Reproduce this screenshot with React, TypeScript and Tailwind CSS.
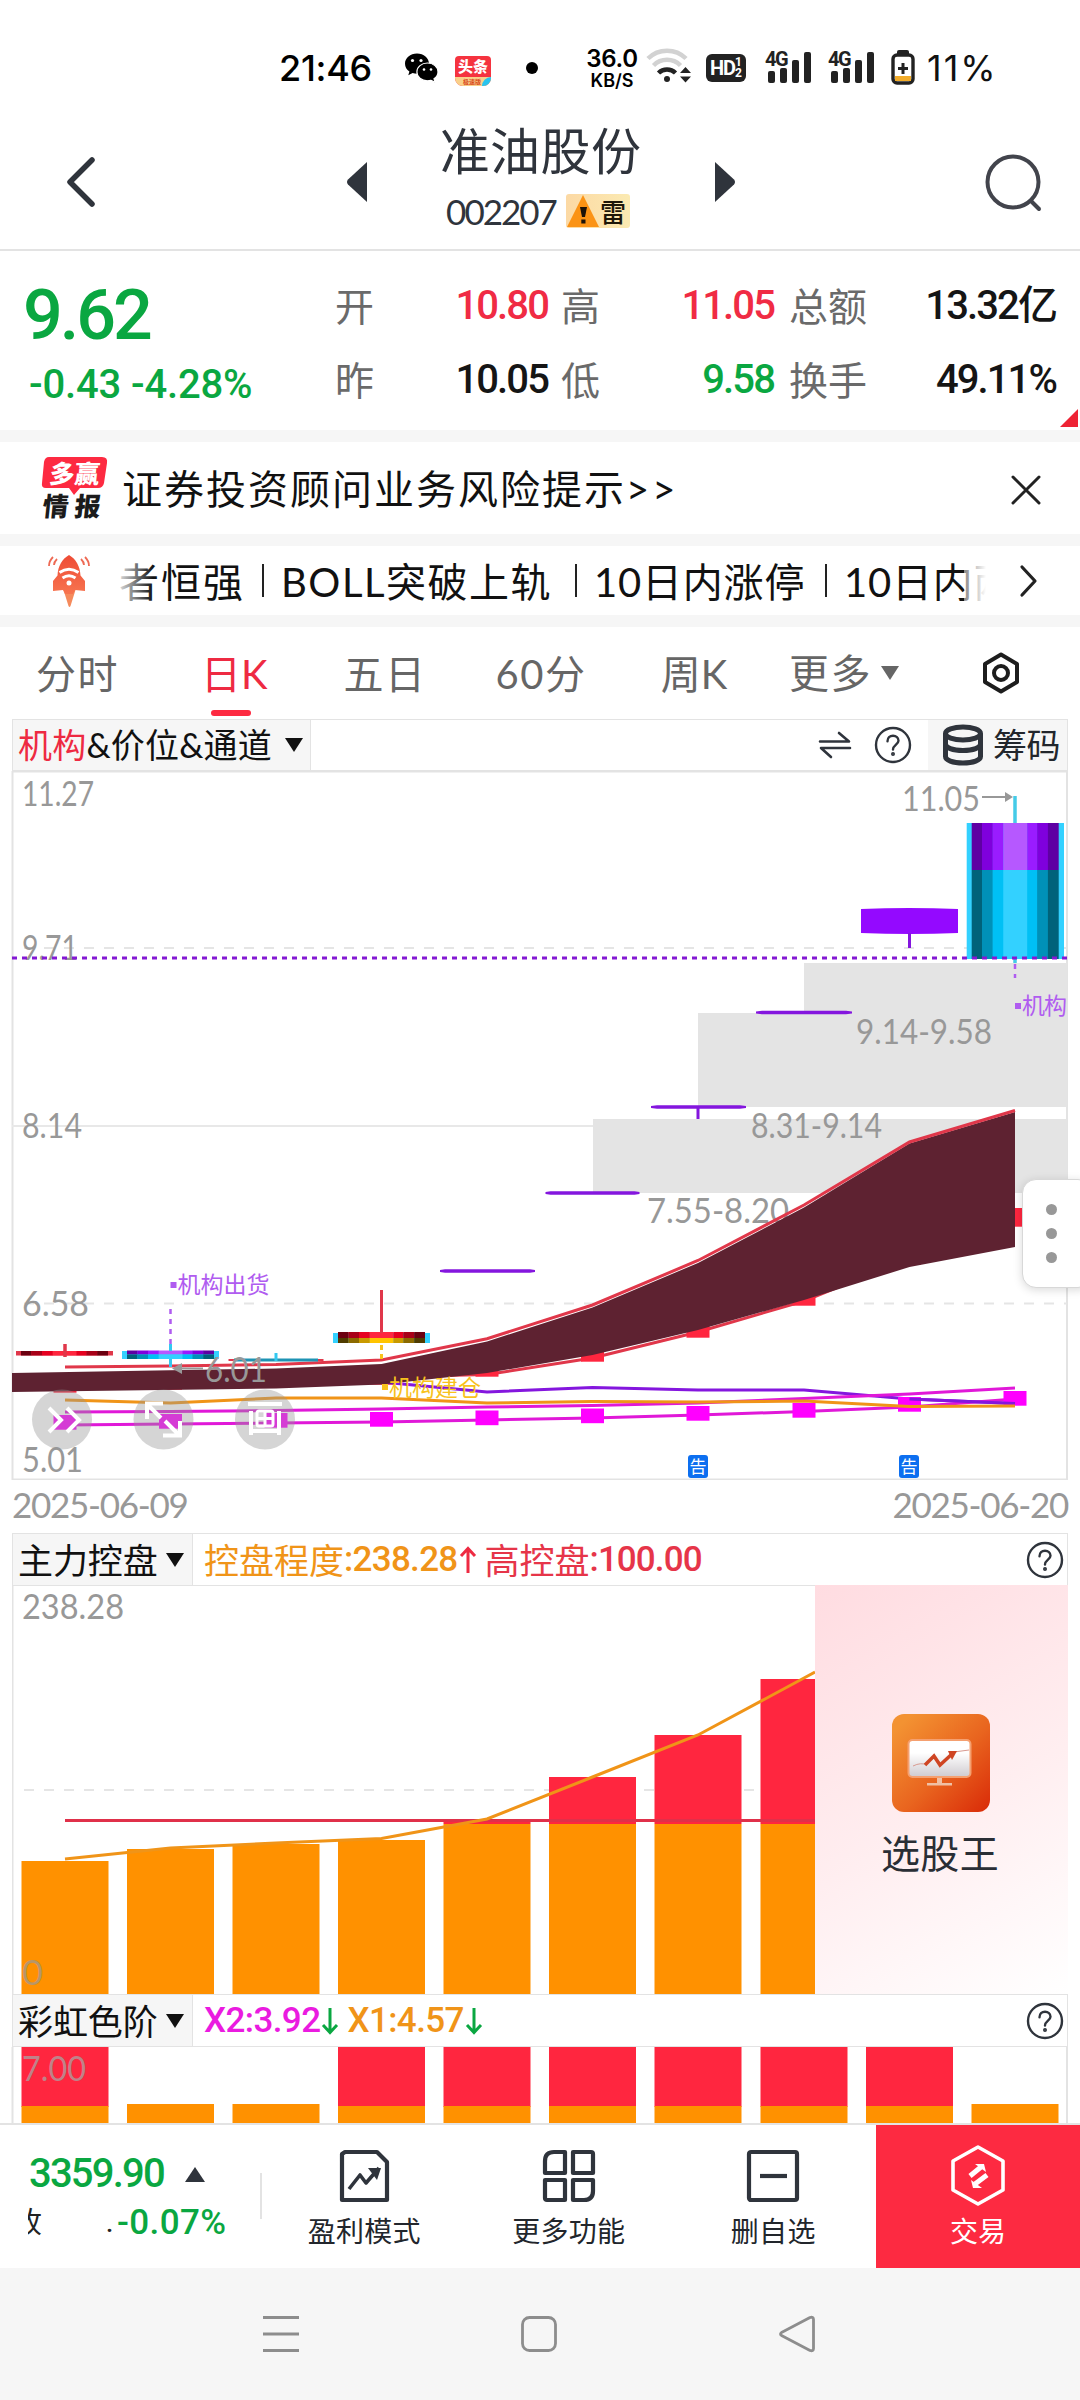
import React from 'react';

const LATO = "font-['Lato','Noto_Sans_CJK_SC',sans-serif]";
const ROBOTO = "font-['Roboto','Noto_Sans_CJK_SC',sans-serif]";

// x centre of each trading day
const DAYS = [65, 170.5, 276, 381.5, 487, 592.5, 698, 804, 909.5, 1015];

const Help = () => (
    <svg width="38" height="38" viewBox="0 0 38 38" fill="none" stroke="#2f343c" strokeWidth="2.4" strokeLinecap="round">
        <circle cx="19" cy="19" r="17" />
        <path d="M13.5 15.2c0-3.4 2.4-5.5 5.5-5.5s5.5 2.1 5.5 5c0 3.6-5.5 4.3-5.5 8.8" />
        <circle cx="19" cy="28" r="0.8" fill="#2f343c" />
    </svg>
);

const Caret = ({ color = '#111' }: any) => (
    <svg width="20" height="16" viewBox="0 0 20 16" className="shrink-0">
        <path d="M1 1h18L10 15z" fill={color} />
    </svg>
);

const Signal = () => (
    <div className="relative w-[46px] h-[34px]">
        <svg width="46" height="34" viewBox="0 0 46 34" fill="#222">
            <rect x="3" y="21" width="7" height="12" rx="2" />
            <rect x="15" y="18" width="7" height="15" rx="2" />
            <rect x="27" y="10" width="7" height="23" rx="2" />
            <rect x="39" y="2" width="7" height="31" rx="2" />
        </svg>
        <span className={`absolute left-0 -top-[1px] text-[20px] leading-[20px] font-bold tracking-[-1.5px] text-[#222] ${ROBOTO}`}>4G</span>
    </div>
);

const StatusBar = () => (
    <div className={`h-[112px] pt-[48px] flex items-start text-black ${LATO}`}>
        <div className="w-[124px] ml-[279px] text-[36px] leading-[40px] font-['Inter'] font-medium tracking-[-0.3px]">21:46</div>
        <svg width="36" height="32" viewBox="0 0 36 32" className="ml-[1px] mt-[4px]">
            <path d="M13 1.500C6.300 1.500 1 6 1 11.700c0 3.200 1.700 6 4.400 7.900L4.300 23.300l4.300-2.200c1.400.4 2.900.6 4.400.6 6.700 0 12-4.400 12-10S19.700 1.500 13 1.500z" />
            <circle cx="8.500" cy="8.500" r="1.600" fill="#fff" />
            <circle cx="17" cy="8.500" r="1.600" fill="#fff" />
            <path d="M23.500 11c-6 0-10.600 4-10.600 8.900s4.600 8.900 10.600 8.900c1.200 0 2.400-.2 3.500-.5l4.200 2.100-1.200-3.700c2.500-1.600 4-4 4-6.800 0-4.900-4.600-8.900-10.500-8.900z" stroke="#fff" strokeWidth="1.200" />
            <circle cx="20" cy="17.500" r="1.300" fill="#fff" />
            <circle cx="27" cy="17.500" r="1.300" fill="#fff" />
        </svg>
        <div className="relative ml-[15px] mt-[8px] w-[36px] h-[30px] rounded-[4px] rounded-b-[8px] overflow-hidden bg-[#f5333f] flex flex-col items-center">
            <div className="text-white text-[15px] leading-[21px] font-black">头条</div>
            <div className="w-full h-[9px] bg-[#f9d08a] text-[#d8481c] text-[6px] leading-[9px] pl-[8px] font-bold">极速版</div>
            <div className="absolute right-0 bottom-0 w-[9px] h-[9px] bg-[#29c3ee] rounded-tl-full"></div>
        </div>
        <div className="ml-[35px] mt-[14px] w-[12px] h-[12px] rounded-full bg-black"></div>
        <div className="ml-[46px] w-[56px] flex flex-col items-center font-['Inter'] font-semibold">
            <div className="text-[24px] leading-[22px] tracking-[-0.3px]">36.0</div>
            <div className="mt-[2px] text-[18px] leading-[18px]">KB/S</div>
        </div>
        <svg width="48" height="36" viewBox="0 0 48 36" className="ml-[6px]" fill="none">
            <path d="M2 10.500a27 27 0 0 1 38 0" stroke="#d2d2d2" strokeWidth="4.500" />
            <path d="M7.500 17.500a19 19 0 0 1 27 0" stroke="#d2d2d2" strokeWidth="4.500" />
            <path d="M12.500 25a12 12 0 0 1 17 0" stroke="#222" strokeWidth="4.500" />
            <circle cx="21" cy="31" r="3" fill="#222" />
            <path d="M34 25h11l-5.500-6zM34 28.500h11l-5.500 6z" fill="#222" />
        </svg>
        <div className={`ml-[12px] mt-[6px] w-[40px] h-[28px] rounded-[6px] bg-[#222] text-white font-bold pl-[4px] flex items-center ${ROBOTO}`}>
            <div className="w-[25px] text-[20px] leading-[28px] tracking-[-1px]">HD</div>
            <div className="text-[12px] leading-[11px]">
                <div>1</div>
                <div>2</div>
            </div>
        </div>
        <div className="ml-[19px] mt-[2px]"><Signal /></div>
        <div className="ml-[17px] mt-[2px]"><Signal /></div>
        <svg width="24" height="36" viewBox="0 0 24 36" className="ml-[17px] mt-px">
            <rect x="6" y="1" width="12" height="6" rx="2" fill="#222" />
            <rect x="2" y="6" width="20" height="28" rx="4" fill="#fff" stroke="#222" strokeWidth="3.400" />
            <path d="M4 27h16v5H4z" fill="#f2ac2a" />
            <path d="M12 14v11M7 19.500h10" stroke="#222" strokeWidth="3" />
        </svg>
        <div className="ml-[12px] text-[36px] leading-[40px] font-['Inter'] tracking-[2px] text-[#111]">11%</div>
    </div>
);

const Header = () => (
    <div className="h-[139px] border-b-2 border-[#e3e3e3] flex text-[#2f343c]">
        <svg width="40" height="60" viewBox="0 0 40 60" className="ml-[59px] mt-[40px]" fill="none" stroke="#2f343c" strokeWidth="5.500" strokeLinecap="round" strokeLinejoin="round">
            <path d="M33 8 11 30l22 22" />
        </svg>
        <svg width="22" height="44" viewBox="0 0 22 44" className="ml-[247px] mt-[48px]">
            <path d="M21 2v40L2 24.500q-2-2.500 0-5z" fill="#2f343c" />
        </svg>
        <div className="w-[346px] flex flex-col items-center">
            <div className={`mt-[8px] text-[50px] leading-[62px] tracking-[0.4px] mr-[1px] ${LATO}`}>准油股份</div>
            <div className="flex items-center mt-[9px] mr-[6px] h-[40px]">
                <div className={`text-[35px] leading-[40px] tracking-[-2px] ${LATO}`}>002207</div>
                <div className="ml-[10px] w-[64px] h-[34px] rounded-[3px] bg-gradient-to-r from-[#fcd9a4] to-[#fbeab2] flex items-center">
                    <svg width="34" height="34" viewBox="0 0 34 34">
                        <path d="M17 1 33 33H1z" fill="#fb9315" />
                        <path d="M14 13h7l-2 10h-3z" fill="#1c1208" />
                        <rect x="15.300" y="25.500" width="4.200" height="4" fill="#1c1208" />
                    </svg>
                    <span className="text-[26px] leading-[34px] font-medium text-[#1d1608] font-['Noto_Sans_CJK_SC']">雷</span>
                </div>
            </div>
        </div>
        <svg width="22" height="44" viewBox="0 0 22 44" className="mt-[48px]">
            <path d="M1 2v40l19-17.500q2-2.500 0-5z" fill="#2f343c" />
        </svg>
        <svg width="64" height="64" viewBox="0 0 64 64" className="ml-[246px] mt-[39px]" fill="none" stroke="#42444c" strokeWidth="4" strokeLinecap="round">
            <circle cx="31" cy="31" r="25.500" />
            <path d="m49 50 8 8" />
        </svg>
    </div>
);

const QuoteRow = ({ items }: any) => (
    <div className="h-[74px] grid grid-cols-[49px_164px_13px_49px_164px_15px_86px_181px] items-center">
        {items.map(([label, value, color]: any) => (
            <React.Fragment key={label}>
                <div className={`text-[39px] leading-[50px] text-[#6a6a6a] whitespace-nowrap ${LATO}`}>{label}</div>
                <div className={`text-right text-[40px] leading-[50px] font-medium tracking-[-1.900px] whitespace-nowrap ${color} ${ROBOTO}`}>{value}</div>
                {label.length === 1 && <div></div>}
            </React.Fragment>
        ))}
    </div>
);

const Quote = () => (
    <div className="h-[179px] flex relative">
        <div className={`w-[335px] pl-[23px] text-[#0aa741] font-medium ${ROBOTO}`}>
            <div className="mt-[22px] text-[70px] leading-[84px] tracking-[-3px]">9.62</div>
            <div className="mt-[3px] ml-[6px] text-[40px] leading-[50px] tracking-[-0.150px] whitespace-nowrap">-0.43 -4.28%</div>
        </div>
        <div className="pt-[18px]">
            <QuoteRow items={[['开', '10.80', 'text-[#f02b44]'], ['高', '11.05', 'text-[#f02b44]'], ['总额', '13.32亿', 'text-[#151515]']]} />
            <QuoteRow items={[['昨', '10.05', 'text-[#151515]'], ['低', '9.58', 'text-[#0aa741]'], ['换手', '49.11%', 'text-[#151515]']]} />
        </div>
        <svg width="18" height="18" viewBox="0 0 18 18" className="absolute right-[2px] bottom-[3px]">
            <path d="M18 0v18H0z" fill="#ee2334" />
        </svg>
    </div>
);

const Gap = () => <div className="h-[12px] bg-[#f6f6f6]"></div>;

const Notice = () => (
    <div className="h-[92px] flex items-center">
        <div className="relative ml-[40px] w-[70px] h-[64px] font-['Noto_Sans_CJK_SC'] font-black">
            <svg width="70" height="40" viewBox="0 0 70 40" className="absolute left-0 top-0">
                <path d="M9 1h53q6 0 5 6l-3 20q-1 5-6 5H40l-6 7-5-7H6q-5 0-4-5l2-21q1-5 5-5z" fill="#fd2a41" />
            </svg>
            <div className="absolute left-[10px] top-[2px] text-white text-[25px] leading-[28px] -skew-x-6">多赢</div>
            <div className="absolute left-[3px] top-[35px] text-[#1b1b1b] text-[26px] leading-[28px] tracking-[6px] -skew-x-6">情报</div>
        </div>
        <div className={`ml-[12px] mt-[2px] text-[40px] leading-[50px] tracking-[2px] text-[#111] flex-1 ${LATO}`}>
            证券投资顾问业务风险提示<span className="tracking-[3px]">&gt;&gt;</span>
        </div>
        <svg width="32" height="32" viewBox="0 0 32 32" className="mr-[38px] mt-[4px]" stroke="#222" strokeWidth="3" strokeLinecap="round">
            <path d="m3 3 26 26M29 3 3 29" />
        </svg>
    </div>
);

const Ticker = () => (
    <div className="h-[69px] flex items-center">
        <svg width="44" height="54" viewBox="0 0 44 54" className="ml-[47px]">
            <defs>
                <linearGradient id="rocket" x1="0" y1="0" x2="0" y2="1">
                    <stop offset="0" stopColor="#ee4b35" />
                    <stop offset="1" stopColor="#f7744f" />
                </linearGradient>
            </defs>
            <path d="M16.500 36h12l-5 16q-1 2-2 0z" fill="#f58a5c" />
            <path d="M22 1c7 4 11 11 11.500 20.500L38 27v10l-10-1-2 4h-8l-2-4-10 1V27l4.500-5.500C11 12 15 5 22 1z" fill="url(#rocket)" />
            <path d="M12.500 18.500q9.500-6.500 19 0M15.500 24q6.500-4.500 13 0" fill="none" stroke="#fff" strokeWidth="3" />
            <circle cx="22" cy="29" r="2.500" fill="#fff" />
            <path d="M6 3q-4 4-4 9M10 5q-3 3-3 6M38 3q4 4 4 9M34 5q3 3 3 6" fill="none" stroke="#ee6a54" strokeWidth="1.800" />
        </svg>
        <div className={`relative ml-[22px] w-[873px] h-[60px] overflow-hidden flex items-center text-[40px] leading-[60px] tracking-[2px] text-[#111] whitespace-nowrap ${LATO}`}>
            <div className="w-[149px] shrink-0 pl-[6px] mt-[2px]">者恒强</div>
            <div className="w-[2px] h-[33px] shrink-0 bg-[#222]"></div>
            <div className="w-[311px] shrink-0 pl-[17px] mt-[2px] tracking-[1.500px]">BOLL突破上轨</div>
            <div className="w-[2px] h-[33px] shrink-0 bg-[#222]"></div>
            <div className="w-[248px] shrink-0 pl-[17px] mt-[2px] tracking-[0.800px]">10日内涨停</div>
            <div className="w-[2px] h-[33px] shrink-0 bg-[#222]"></div>
            <div className="shrink-0 pl-[17px] mt-[2px] tracking-[0.800px]">10日内两</div>
            <div className="absolute left-0 top-0 w-[40px] h-full bg-gradient-to-r from-white to-white/0"></div>
            <div className="absolute right-0 top-0 w-[22px] h-full bg-gradient-to-l from-white to-white/50"></div>
        </div>
        <svg width="20" height="34" viewBox="0 0 20 34" className="ml-[33px]" fill="none" stroke="#222" strokeWidth="3.200" strokeLinecap="round" strokeLinejoin="round">
            <path d="m3 3 13 14L3 31" />
        </svg>
    </div>
);

const Tabs = () => (
    <div className={`h-[92px] flex text-[40px] leading-[94px] tracking-[1.500px] text-[#666] whitespace-nowrap ${LATO}`}>
        <div className="w-[166px] pl-[36px]">分时</div>
        <div className="w-[130px] relative pl-[35px] text-[#ee2a42] tracking-[0px]">
            日K
            <div className="absolute left-[45px] bottom-[3px] w-[40px] h-[6px] rounded-[3px] bg-[#fd2a41]"></div>
        </div>
        <div className="w-[178px] text-center">五日</div>
        <div className="w-[134px] text-center">60分</div>
        <div className="w-[172px] text-center tracking-[0px]">周K</div>
        <div className="w-[180px] pl-[9px] flex items-center gap-[8px]">更多<Caret color="#666" /></div>
        <svg width="42" height="44" viewBox="0 0 42 44" className="ml-[20px] mt-[24px]" fill="none" stroke="#1d1d1d" strokeWidth="4" strokeLinejoin="round">
            <path d="M21 3.500 37 13v18L21 40.500 5 31V13z" />
            <circle cx="21" cy="22" r="7" />
        </svg>
    </div>
);

const Toolbar = () => (
    <div className={`mx-[12px] h-[52px] border border-[#e3e3e3] flex items-center text-[34px] leading-[50px] text-[#111] ${LATO}`}>
        <div className="w-[298px] h-full bg-[#f6f6f6] border-r border-[#e3e3e3] pl-[5px] flex items-center gap-[8px] whitespace-nowrap">
            <div className="w-[258px] tracking-[0.200px]"><span className="text-[#ee2a42]">机构</span>&amp;价位&amp;通道</div>
            <Caret />
        </div>
        <svg width="34" height="32" viewBox="0 0 34 32" className="ml-[507px]" fill="none" stroke="#2f343c" strokeWidth="2.600" strokeLinecap="round" strokeLinejoin="round">
            <path d="M2 12.500h29L21 4M32 19H3l10 9" />
        </svg>
        <div className="ml-[22px] flex items-center"><Help /></div>
        <div className="ml-auto w-[139px] h-full bg-[#f6f6f6] flex items-center pl-[13px]">
            <svg width="44" height="42" viewBox="0 0 44 42" fill="none" stroke="#2f343c" strokeWidth="5">
                <ellipse cx="22" cy="9.500" rx="17.500" ry="6.500" />
                <path d="M4.500 9.500v23c0 3.500 7 6.500 17.500 6.500s17.500-3 17.500-6.500v-23M4.500 20c0 3.500 7 6.500 17.500 6.500S39.500 23.500 39.500 20" />
            </svg>
            <span className="ml-[8px] text-[#22262c] tracking-[-0.500px]">筹码</span>
        </div>
    </div>
);

// body drawn as a shaded cylinder of vertical strips
const Strips = ({ x, y, h, colors }: any) => {
    const edges = [5, 15.3, 26, 36.7, 60.5, 70.4, 81.2, 91.8];
    return colors.concat(colors.slice(0, 3).reverse()).map((c: string, i: number) => (
        <rect key={i} x={x + edges[i]} y={y} width={edges[i + 1] - edges[i] + 0.2} height={h} fill={c} />
    ));
};

const PURPLE = ['#5e00a3', '#7f00dd', '#9a1cff', '#b658ff'];
const CYAN = ['#00627a', '#0091b8', '#00c0f5', '#33d1ff'];
const RED = ['#6b0010', '#a80018', '#e60020', '#ff263f'];
const GOLD = ['#4f3c00', '#8c6a00', '#c99a00', '#ffc400'];

const Label = ({ x, y, w, children, fill = '#989898' }: any) => (
    <text x={x} y={y} textLength={w} lengthAdjust="spacingAndGlyphs" fontSize="35" fontFamily="Lato" fill={fill}>{children}</text>
);

const line = (ys: number[], from = 0) => ys.map((y, i) => `${DAYS[i + from]},${y}`).join(' ');

const KChart = () => {
    const redTops = [1374, 1371, 1369, 1366, 1358, 1343, 1319, 1287, 1246, 1208];
    const pinkTops = [1415, 1414, 1413, 1412, 1410.5, 1408.5, 1406, 1403, 1397, 1391];
    return (
        <svg width="1080" height="709" viewBox="0 771 1080 709" className="block">
            <path d="M12.500 771V1479.500H1067V771M12 771.500h1055" fill="none" stroke="#e3e3e3" strokeWidth="2" />
            <path d="M24 948H1067M24 1303.500H1067" stroke="#e5e5e5" strokeWidth="2" strokeDasharray="10 10" />
            <path d="M12 1126H1067" stroke="#e8e8e8" strokeWidth="2" />
            <path d="M804 963H1067V1107H698V1013H804z" fill="#e4e4e4" />
            <path d="M593 1119H1067V1193H593z" fill="#e4e4e4" />

            <Label x={22} y={806} w={72}>11.27</Label>
            <Label x={22} y={960} w={56}>9.71</Label>
            <Label x={22} y={1138} w={60}>8.14</Label>
            <Label x={22} y={1316} w={67}>6.58</Label>
            <Label x={22} y={1472} w={61}>5.01</Label>
            <Label x={856} y={1044} w={136}>9.14-9.58</Label>
            <Label x={751} y={1138} w={131}>8.31-9.14</Label>
            <Label x={647} y={1223} w={142}>7.55-8.20</Label>
            <Label x={902} y={811} w={78}>11.05</Label>

            {/* last price */}
            <rect x="966.700" y="823" width="97.300" height="136" fill="#33d1ff" />
            <Strips x={966.7} y={823} h={47} colors={PURPLE} />
            <Strips x={966.7} y={870} h={89} colors={CYAN} />
            <path d="M1015 796v27M1015 959v4" stroke="#45cbe8" strokeWidth="3.500" />
            <path d="M1015 964v14" stroke="#b05cf0" strokeWidth="2.500" strokeDasharray="5 5" />
            <path d="M12 958H1067" stroke="#8318d4" strokeWidth="3" strokeDasharray="5 5" />
            <path d="M982 797h24" stroke="#989898" strokeWidth="2" />
            <path d="m1005 792 8 5-8 5z" fill="#989898" />

            {/* limit-up days */}
            <g fill="#8416de">
                <path d="M861 909q48-2 97 0v24q-48 2-97 0z" fill="#9409ff" />
                <rect x="908" y="933" width="3" height="15" />
                <path d="M756 1011.500l6-.8h84l6 .8v2l-6 .8h-84l-6-.8z" />
                <path d="M651 1106l6-.8h83l6 .8v2l-6 .8h-83l-6-.8z" />
                <rect x="696.500" y="1108" width="3" height="11" />
                <path d="M545.500 1192l5-.8h84l5 .8v2l-5 .8h-84l-5-.8z" />
                <path d="M440 1270l5-.8h85l5 .8v2l-5 .8h-85l-5-.8z" />
            </g>

            {/* institution cost lines */}
            <polyline points={line([1383, 1381, 1379, 1377, 1374.5, 1358, 1332, 1301, 1258, 1217])} fill="none" stroke="#e0374a" strokeWidth="3" />
            {redTops.map((y, i) => <rect key={i} x={DAYS[i] - 11.5} y={y} width="23" height="18.700" fill="#ff263f" />)}
            <polyline points={line([1382, 1392, 1387.5, 1390, 1390, 1399, 1403.5], 3)} fill="none" stroke="#8416de" strokeWidth="3" />
            <polygon
                points="12,1373 276,1368.500 381.500,1364 487,1341.500 592.500,1307.500 698,1263 804,1207.500 909.500,1143.500 1015,1112 1015,1247 909.500,1267 804,1300 698,1330 592.500,1355 487,1373 381.500,1384.500 276,1388.500 12,1392"
                fill="#5e2231"
            />
            <polyline points={line([1367, 1366, 1364.5, 1360, 1338.7, 1305, 1260.500, 1205, 1142, 1110.500])} fill="none" stroke="#e0374a" strokeWidth="3" />

            <polyline points={line([1412, 1411.5, 1410.5, 1409, 1407, 1405.5, 1403, 1398.5, 1394, 1388])} fill="none" stroke="#e018d8" strokeWidth="3" />
            <polyline points={line([1425, 1424, 1423, 1422, 1420, 1418, 1415, 1411.5, 1407, 1399])} fill="none" stroke="#e018d8" strokeWidth="3" />
            {pinkTops.map((y, i) => <rect key={i} x={DAYS[i] - 11.5} y={y} width="23" height="14.700" fill="#ff00ff" />)}
            <polyline points={line([1399, 1403.500], 8)} fill="none" stroke="#8416de" strokeWidth="3" />
            <polyline points={line([1400, 1403, 1398, 1398, 1403, 1401.5, 1402, 1401, 1406.5, 1406])} fill="none" stroke="#f09418" strokeWidth="3" />

            {/* early candles */}
            <rect x="16" y="1351" width="97" height="4.500" fill="#e0374a" />
            <Strips x={16} y={1351} h={4.5} colors={RED} />
            <path d="M65 1344v13" stroke="#e0374a" strokeWidth="3.500" />
            <rect x="122" y="1351" width="97" height="8" fill="#33d1ff" />
            <Strips x={122} y={1350.5} h={4} colors={PURPLE} />
            <Strips x={122} y={1354.5} h={4.5} colors={CYAN} />
            <path d="M170.500 1344v7M170.500 1359v8" stroke="#33c8f0" strokeWidth="3" />
            <path d="M170.500 1309v35" stroke="#b05cf0" strokeWidth="2.500" strokeDasharray="5 5" />
            <path d="M228.500 1360h95" stroke="#e0374a" strokeWidth="2" />
            <path d="M234 1360h84" stroke="#1e93b4" strokeWidth="3" />
            <path d="M276 1353v8" stroke="#33c8f0" strokeWidth="3" />
            <rect x="333" y="1333" width="97" height="10" fill="#33d1ff" />
            <Strips x={333} y={1332} h={6} colors={RED} />
            <Strips x={333} y={1338} h={5} colors={GOLD} />
            <path d="M381.500 1290v43" stroke="#e0374a" strokeWidth="3" />
            <path d="M381.500 1345v15" stroke="#f8c21c" strokeWidth="3" strokeDasharray="5 4" />

            <path d="M181 1368.500h22" stroke="#989898" strokeWidth="2" />
            <path d="m182 1363-10 5.500 10 5.500z" fill="#989898" />
            <Label x={205} y={1382} w={62}>6.01</Label>

            <g fontFamily="Noto Sans CJK SC" fontSize="23">
                <rect x="170.500" y="1282" width="6" height="6" fill="#b05cf0" />
                <text x="177.500" y="1293" fill="#b05cf0">机构出货</text>
                <rect x="382" y="1384" width="6" height="6" fill="#f8c21c" />
                <text x="389" y="1396" fill="#f8c21c">机构建仓</text>
                <rect x="1015" y="1003" width="6" height="6" fill="#b05cf0" />
                <text x="1022" y="1013.500" fill="#b05cf0" textLength="45">机构</text>
            </g>

            {[698, 909].map((x) => (
                <g key={x}>
                    <rect x={x - 10} y="1455" width="20" height="23" rx="3" fill="#0d6ff0" />
                    <text x={x} y="1472.500" textAnchor="middle" fontFamily="Noto Sans CJK SC" fontSize="17" fill="#fff">告</text>
                </g>
            ))}

            {/* floating tools */}
            <g fill="#969696" fillOpacity="0.4">
                <circle cx="62" cy="1419.500" r="30" />
                <circle cx="163.500" cy="1419.500" r="30" />
                <circle cx="265" cy="1419.500" r="30" />
            </g>
            <g fill="none" stroke="#fff" strokeWidth="4">
                <path d="m49 1408 12 12-12 12M67 1408l12 12-12 12" />
                <path d="M163 1403.500h-16V1419M148 1405l13 13M165 1421l15 15M163 1435.500h17V1421" />
                <path d="M248 1404h34M251 1435V1411M279 1435V1411M251 1431h28" />
                <rect x="257" y="1411" width="16" height="15" rx="2" strokeWidth="3" />
                <path d="M265 1411v15M257 1418.500h16" strokeWidth="3" />
            </g>
        </svg>
    );
};

const SubHeader = ({ name, children }: any) => (
    <div className={`mx-[12px] h-[53px] border border-[#e3e3e3] flex items-center text-[35px] leading-[50px] text-[#111] whitespace-nowrap ${LATO}`}>
        <div className="w-[180px] h-full bg-[#f6f6f6] border-r border-[#e3e3e3] pl-[5px] flex items-center">
            <div className="w-[147px] tracking-[-0.100px]">{name}</div>
            <Caret />
        </div>
        <div className="flex-1 pl-[11px] flex items-center">{children}</div>
        <div className="mr-[3px]"><Help /></div>
    </div>
);

const Arrow = ({ color, down }: any) => (
    <svg width="20" height="28" viewBox="0 0 20 28" fill="none" stroke={color} strokeWidth="3" className={down ? 'rotate-180' : ''}>
        <path d="M10 27V3M3 10l7-7.500L17 10" />
    </svg>
);

const ControlChart = () => {
    const tops = [1861, 1849, 1844, 1840, 1822, 1777, 1735, 1679];
    return (
        <svg width="803" height="408" viewBox="12 1586 803 408" className="block">
            <path d="M12.500 1586v408" stroke="#e3e3e3" strokeWidth="2" />
            <path d="M24 1790H815" stroke="#e5e5e5" strokeWidth="2" strokeDasharray="10 10" />
            <Label x={22} y={1619} w={102}>238.28</Label>
            {tops.map((y, i) => (
                <g key={i}>
                    {y < 1824 && <rect x={DAYS[i] - 43.5} y={y} width="87" height={1824 - y} fill="#ff263f" />}
                    <rect x={DAYS[i] - 43.5} y={Math.max(y, 1824)} width="87" height="171" fill="#ff9100" />
                </g>
            ))}
            <path d="M65 1820.500H815" stroke="#e0304a" strokeWidth="3" />
            <polyline points={line([1859, 1848, 1843, 1838.5, 1819, 1777, 1735, 1678]) + ' 815,1672'} fill="none" stroke="#f09418" strokeWidth="3" />
            <Label x={22} y={1985} w={21} fill="#b89668">0</Label>
        </svg>
    );
};

const Promo = () => (
    <div className="w-[253px] h-[409px] -mt-px bg-[linear-gradient(150deg,#ffdce1_0%,#ffeef0_55%,#ffffff_100%)] flex flex-col items-center">
        <svg width="98" height="98" viewBox="0 0 98 98" className="mt-[129px] mr-[1px]">
            <defs>
                <linearGradient id="tile" x1="0" y1="0" x2="1" y2="1">
                    <stop offset="0.1" stopColor="#f39232" />
                    <stop offset="0.55" stopColor="#e9651f" />
                    <stop offset="1" stopColor="#d92a08" />
                </linearGradient>
                <linearGradient id="screen" x1="0" y1="0" x2="0" y2="1">
                    <stop offset="0.35" stopColor="#fff" />
                    <stop offset="1" stopColor="#cfcbd0" />
                </linearGradient>
            </defs>
            <rect width="98" height="98" rx="12" fill="url(#tile)" />
            <rect x="16.500" y="26" width="62" height="37" rx="4" fill="url(#screen)" stroke="#f5a070" strokeWidth="2" />
            <path d="M45 64h5v5h10v2.500H35V69h10z" fill="#efc0a5" />
            <path d="M21 52q8-4 14-1M62 38l15-2" stroke="#d99a90" fill="none" />
            <path d="m33 51 9-9 6 9 12-11" fill="none" stroke="#cf4523" strokeWidth="3.500" />
            <path d="m56 37 9 0-5 9z" fill="#cf4523" />
        </svg>
        <div className={`mt-[14px] text-[39px] leading-[54px] tracking-[0.300px] text-[#2a2e35] mr-[3px] ${LATO}`}>选股王</div>
    </div>
);

const RainbowChart = () => (
    <svg width="1080" height="76" viewBox="0 2047 1080 76" className="block">
        <path d="M12.500 2047v76M1067 2047v76" stroke="#e3e3e3" strokeWidth="2" />
        {DAYS.map((x, i) => {
            const high = ![1, 2, 9].includes(i);
            return (
                <g key={x}>
                    {high && <rect x={x - 43.5} y="2047" width="87" height="60" fill="#ff263f" />}
                    <rect x={x - 43.5} y={high ? 2106 : 2104} width="87" height="20" fill="#ff9100" />
                </g>
            );
        })}
        <Label x={22} y={2081} w={64} fill="#bf8289">7.00</Label>
    </svg>
);

const Action = ({ label, children }: any) => (
    <div className="w-[204.500px] flex flex-col items-center">
        <svg width="60" height="64" viewBox="0 0 60 64" className="mt-[19px]" fill="none" stroke="#2f343c" strokeWidth="4.200" strokeLinejoin="round">{children}</svg>
        <div className="mt-[2px] text-[28px] leading-[42px] tracking-[0.300px]">{label}</div>
    </div>
);

const BottomBar = () => (
    <div className={`h-[145px] border-t-2 border-[#e3e3e3] bg-white flex text-[#22262c] ${LATO}`}>
        <div className={`w-[260px] text-[#0aa741] font-medium ${ROBOTO}`}>
            <div className="mt-[24px] ml-[29px] flex items-center h-[50px] text-[40px] tracking-[-1.800px]">
                <div className="w-[156px]">3359.90</div>
                <svg width="20" height="15" viewBox="0 0 20 15"><path d="M10 0 20 15H0z" fill="#2f343c" /></svg>
            </div>
            <div className="ml-[28px] flex items-center h-[48px] text-[35px] tracking-[0.400px]">
                <div className="w-[14px] h-[46px] overflow-hidden flex justify-end text-[#222] text-[29px] leading-[46px] font-normal tracking-normal shrink-0">收</div>
                <div className="ml-[64px] w-[11px] text-[#222] text-[26px]">.</div>
                <div>-0.07%</div>
            </div>
        </div>
        <div className="mt-[48px] w-[2px] h-[46px] bg-[#e3e3e3]"></div>
        <Action label="盈利模式">
            <path d="M9 7h32l10 10v38H6V9z" transform="translate(2 1)" />
            <path d="m15 45 11-14 6 8 13-15" strokeWidth="3.600" />
            <path d="M34 24h13l-4 12z" fill="#2f343c" stroke="none" />
        </Action>
        <Action label="更多功能">
            <path d="M15 8h11v21H6V17q0-9 9-9zM34 8h18q2 0 2 2v19H34zM6 36h20v20H8q-2 0-2-2zM34 36h20v11q0 9-9 9H34z" />
        </Action>
        <Action label="删自选">
            <rect x="6" y="8" width="48" height="48" rx="2" />
            <path d="M17 32h27" />
        </Action>
        <div className="ml-auto w-[204px] h-[143px] bg-[#fd2a41] text-white flex flex-col items-center">
            <svg width="60" height="64" viewBox="0 0 60 64" className="mt-[19px]" fill="none" stroke="#fff" strokeWidth="3.600" strokeLinejoin="round">
                <path d="m30 3 25 14v29L30 60 5 46V17z" />
                <path d="m22 32 11-9M27 40l12-9" strokeWidth="5" />
                <path d="M27 20h9l2 8zM23 36h0l2 8h9z" fill="#fff" stroke="none" />
            </svg>
            <div className="mt-[2px] text-[28px] leading-[42px]">交易</div>
        </div>
    </div>
);

const NavBar = () => (
    <div className="h-[132px] bg-[#f6f6f6] flex items-start pt-[46px]">
        <svg width="36" height="40" viewBox="0 0 36 40" className="ml-[263px]" stroke="#8d8d8d" strokeWidth="2.800">
            <path d="M0 3.500h36M0 20h36M0 36.500h36" />
        </svg>
        <svg width="40" height="40" viewBox="0 0 40 40" className="ml-[220px]" fill="none" stroke="#8d8d8d" strokeWidth="2.800">
            <rect x="3.500" y="3.500" width="33" height="33" rx="7" />
        </svg>
        <svg width="40" height="40" viewBox="0 0 40 40" className="ml-[219px]" fill="none" stroke="#8d8d8d" strokeWidth="2.800" strokeLinejoin="round">
            <path d="M3.500 18.500 32 3.500q3.500-1 3.500 2v29q0 3-3.500 2L3.500 21.500q-2-1.500 0-3z" />
        </svg>
    </div>
);

const App = () => {
    return (
        <div className="relative w-[1080px] h-[2400px] bg-white overflow-hidden flex flex-col">
            <StatusBar />
            <Header />
            <Quote />
            <Gap />
            <Notice />
            <Gap />
            <Ticker />
            <Gap />
            <Tabs />
            <Toolbar />
            <KChart />
            <div className="h-[53px] px-[12px] flex justify-between font-['Lato'] text-[35px] leading-[48px] tracking-[-1.300px] text-[#989898]">
                <div>2025-06-09</div>
                <div>2025-06-20</div>
            </div>
            <SubHeader name="主力控盘">
                <div className="flex items-center text-[#f09418]">
                    控盘程度<span className={`font-medium tracking-[-0.700px] ${ROBOTO}`}>:238.28</span>
                </div>
                <Arrow color="#ee2a42" />
                <div className="ml-[7px] flex items-center text-[#e63549]">
                    高控盘<span className={`font-medium tracking-[-0.900px] ${ROBOTO}`}>:100.00</span>
                </div>
            </SubHeader>
            <div className="flex pl-[12px] h-[408px]">
                <ControlChart />
                <Promo />
            </div>
            <SubHeader name="彩虹色阶">
                <div className={`font-medium tracking-[-0.600px] text-[#ea1be0] ${ROBOTO}`}>X2:3.92</div>
                <Arrow color="#0aa741" down />
                <div className={`ml-[7px] font-medium tracking-[-0.600px] text-[#f09418] ${ROBOTO}`}>X1:4.57</div>
                <Arrow color="#0aa741" down />
            </SubHeader>
            <RainbowChart />
            <BottomBar />
            <NavBar />

            {/* drawer handle over the chart */}
            <div className="absolute left-[1022px] top-[1179px] w-[70px] h-[109px] rounded-[14px] bg-white border border-[#d8d8d8] shadow-[0_2px_10px_rgba(0,0,0,0.15)] flex flex-col items-start justify-center gap-[13px] pl-[23px]">
                <div className="w-[11px] h-[11px] rounded-full bg-[#989898]"></div>
                <div className="w-[11px] h-[11px] rounded-full bg-[#989898]"></div>
                <div className="w-[11px] h-[11px] rounded-full bg-[#989898]"></div>
            </div>
        </div>
    );
};

export default App;
